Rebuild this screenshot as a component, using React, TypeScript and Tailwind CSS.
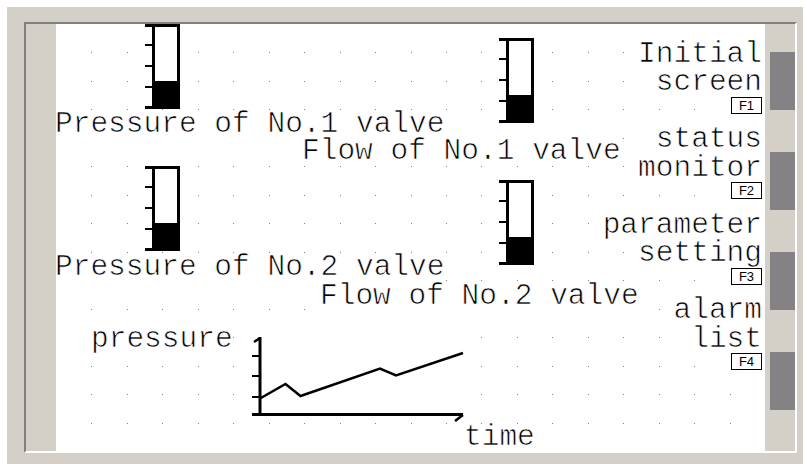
import React from "react";

const COLS = Array.from({ length: 19 }, (_, i) => Math.round((i + 1) * 35.45));
const ROWS = Array.from({ length: 14 }, (_, j) => Math.round((j + 1) * 28.47));

// background dot grid of the screen editor
const DotGrid = () => (
  <svg className="absolute inset-0" width="709" height="427" shapeRendering="crispEdges">
    {ROWS.map((y) =>
      COLS.map((x) => <rect key={`${x}-${y}`} x={x} y={y} width="1" height="1" fill="#808080" />)
    )}
  </svg>
);

const BarGauge = ({ className }: { className: string }) => (
  <svg className={className} width="35" height="85" viewBox="0 0 35 85" shapeRendering="crispEdges">
    <rect x="7" y="0" width="28" height="85" fill="#fff" />
    <rect x="7" y="57" width="28" height="28" fill="#000" />
    <rect x="7" y="0" width="3" height="85" fill="#000" />
    <rect x="32" y="0" width="3" height="85" fill="#000" />
    <rect x="0" y="0" width="35" height="3" fill="#000" />
    <rect x="0" y="82" width="35" height="3" fill="#000" />
    <rect x="0" y="20" width="8" height="2" fill="#000" />
    <rect x="0" y="41" width="8" height="2" fill="#000" />
    <rect x="0" y="62" width="8" height="2" fill="#000" />
  </svg>
);

const TrendChart = () => (
  <svg className="absolute left-[194px] top-[310px] overflow-visible" width="216" height="90">
    <rect x="0" y="0" width="216" height="84" fill="#fff" />
    <g stroke="#000" fill="none">
      <path d="M10 3 V81" strokeWidth="3" />
      <path d="M10 4 L4 8" strokeWidth="2.5" />
      <path d="M2 22 H10 M2 42 H10 M2 63 H10" strokeWidth="2" />
      <path d="M2 80.5 H213" strokeWidth="3" />
      <path d="M213 81 L205 87" strokeWidth="2.5" />
      <path d="M10 64.5 L35.5 50 L50.5 62 L130 34.5 L146 41.5 L213 19" strokeWidth="2.5" />
    </g>
  </svg>
);

const mono =
  "font-['Liberation_Mono',monospace] text-[29.5px] text-black whitespace-pre bg-white [-webkit-text-stroke:0.7px_white]";

const menu = [
  { lines: ["Initial", "screen"], key: "F1" },
  { lines: ["status", "monitor"], key: "F2" },
  { lines: ["parameter", "setting"], key: "F3" },
  { lines: ["alarm", "list"], key: "F4" },
];

export default function App() {
  return (
    <div className="w-[807px] h-[464px] bg-white pl-[7px] pt-[7px] pr-[4px] overflow-hidden">
      <div className="h-full bg-[#d4d0c8] pl-[17px] pt-[15px] pr-[6px]">
        <div className="flex border-2 border-t-[#808080] border-l-[#808080] border-r-white border-b-white">
          <div className="w-[30px]" />

          <div className="relative w-[709px] h-[427px] bg-white overflow-hidden flex justify-end pt-[16px] pr-[3px]">
            <DotGrid />

            <BarGauge className="absolute left-[89px] top-0" />
            <BarGauge className="absolute left-[443px] top-[14px]" />
            <BarGauge className="absolute left-[89px] top-[142px]" />
            <BarGauge className="absolute left-[443px] top-[156px]" />

            <span className={`absolute left-[-1px] top-[86px] leading-[28.5px] ${mono}`}>Pressure of No.1 valve</span>
            <span className={`absolute left-[246px] top-[113px] leading-[28.5px] ${mono}`}>Flow of No.1 valve</span>
            <span className={`absolute left-[-1px] top-[229px] leading-[28.5px] ${mono}`}>Pressure of No.2 valve</span>
            <span className={`absolute left-[264px] top-[258px] leading-[28.5px] ${mono}`}>Flow of No.2 valve</span>
            <span className={`absolute left-[35px] top-[301px] leading-[28.5px] ${mono}`}>pressure</span>
            <span className={`absolute left-[408px] top-[402px] leading-[22px] ${mono}`}>time</span>

            <TrendChart />

            {/* function key menu */}
            <div className="relative flex flex-col items-end">
              {menu.map((m) => (
                <React.Fragment key={m.key}>
                  {m.lines.map((l) => (
                    <span key={l} className={`block h-[28.47px] leading-[28.5px] ${mono}`}>
                      {l}
                    </span>
                  ))}
                  <div className="h-[28.47px] pl-[3px] bg-white">
                    <div className="w-[31px] h-[17px] border border-black flex items-center justify-center font-['Liberation_Sans',sans-serif] text-[13px] leading-none text-black">
                      {m.key}
                    </div>
                  </div>
                </React.Fragment>
              ))}
            </div>
          </div>

          <div className="w-[30px] flex flex-col items-end pt-[28px] gap-[42px]">
            {menu.map((m) => (
              <div key={m.key} className="w-[25px] h-[58px] bg-[#848284]" />
            ))}
          </div>
        </div>
      </div>
    </div>
  );
}
